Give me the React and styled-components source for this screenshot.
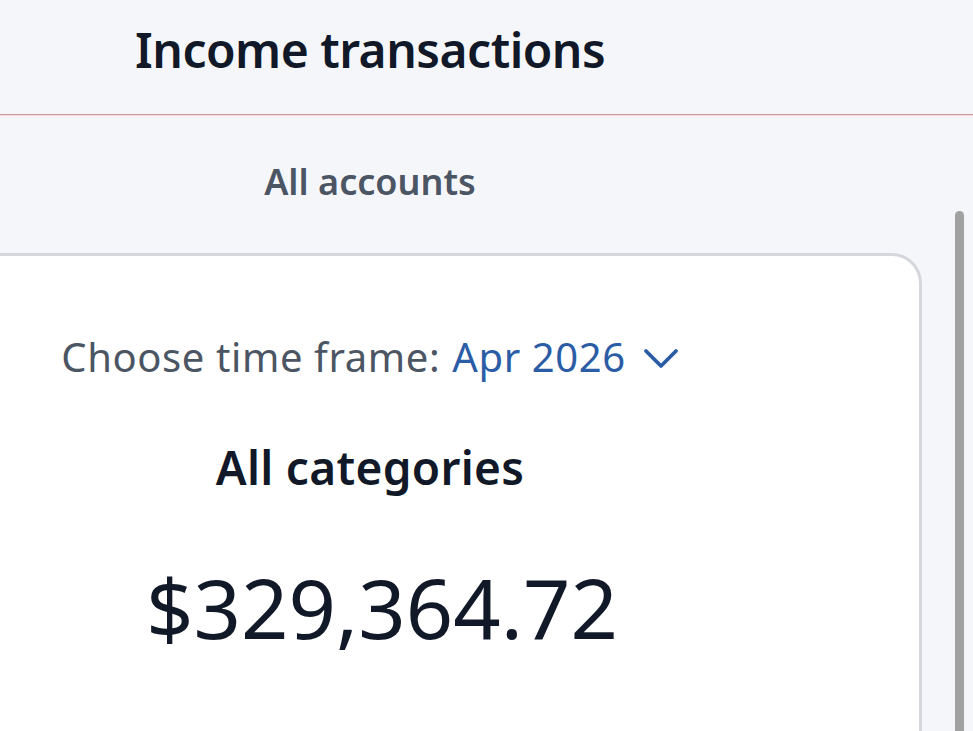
import React from "react";
import styled, { createGlobalStyle } from "styled-components";

const Global = createGlobalStyle`
  html, body { margin: 0; padding: 0; }
  body {
    background: #f5f6fa;
    font-family: "Noto Sans", "Open Sans", sans-serif;
    -webkit-font-smoothing: antialiased;
  }
`;

const Page = styled.div`
  width: 973px;
  height: 731px;
  display: flex;
  flex-direction: column;
  overflow: hidden;
  background: #f5f6fa;
`;

const Header = styled.header`
  height: 115px;
  box-sizing: border-box;
  padding: 17px 0 0 135px;
  border-bottom: 1px solid #cf959b;
  box-shadow: 0 1px 1px rgba(236, 170, 178, 0.35);
`;

const Title = styled.h1`
  margin: 0;
  font-size: 48px;
  line-height: 1.362;
  font-weight: 600;
  letter-spacing: -0.5px;
  color: #111827;
`;

const Body = styled.div`
  flex: 1;
  display: grid;
  grid-template-columns: 922px 51px;
  min-height: 0;
`;

const Main = styled.main`
  margin-left: -182px;
  display: flex;
  flex-direction: column;
  align-items: stretch;
  min-width: 0;
`;

const AccountLabel = styled.div`
  padding-top: 42px;
  height: 138px;
  box-sizing: border-box;
  text-align: center;
  font-size: 36px;
  line-height: 1.362;
  font-weight: 600;
  color: #4b5563;
`;

const Card = styled.section`
  flex: 1;
  background: #ffffff;
  border: 3px solid #d5d7dc;
  border-bottom: none;
  border-radius: 30px 30px 0 0;
  display: flex;
  flex-direction: column;
  align-items: center;
  padding-top: 74px;
`;

const TimeFrame = styled.div`
  display: flex;
  align-items: center;
  font-size: 40px;
  line-height: 1.362;
  letter-spacing: 0.6px;
  color: #4b5563;
`;

const TimeButton = styled.button`
  display: flex;
  align-items: center;
  gap: 17px;
  margin-left: 12px;
  padding: 0;
  border: none;
  background: none;
  font: inherit;
  letter-spacing: inherit;
  color: #2b5ca6;
  cursor: pointer;
`;

const Chevron = styled.svg`
  width: 36px;
  height: 22px;
  margin-top: 4px;
`;

const CategoryTitle = styled.h2`
  margin: 52px 0 0;
  font-size: 46px;
  line-height: 1.362;
  font-weight: 600;
  letter-spacing: 0.3px;
  color: #111827;
`;

const Amount = styled.div`
  margin-top: 51px;
  padding-left: 24px;
  font-size: 83px;
  line-height: 1.362;
  font-weight: 400;
  color: #111827;
`;

const Rail = styled.div`
  display: flex;
  padding: 96px 0 0 33px;
`;

const Thumb = styled.div`
  width: 9px;
  background: #a1a1a1;
  border-radius: 5px 5px 0 0;
`;

export default function App() {
  return (
    <>
      <Global />
      <Page>
        <Header>
          <Title>Income transactions</Title>
        </Header>
        <Body>
          <Main>
            <AccountLabel>All accounts</AccountLabel>
            <Card>
              <TimeFrame>
                Choose time frame:
                <TimeButton>
                  Apr 2026
                  <Chevron viewBox="0 0 36 22" fill="none">
                    <polyline
                      points="3,3 18,18 33,3"
                      stroke="#2b5ca6"
                      strokeWidth="3.8"
                      strokeLinecap="round"
                      strokeLinejoin="round"
                    />
                  </Chevron>
                </TimeButton>
              </TimeFrame>
              <CategoryTitle>All categories</CategoryTitle>
              <Amount>$329,364.72</Amount>
            </Card>
          </Main>
          <Rail>
            <Thumb />
          </Rail>
        </Body>
      </Page>
    </>
  );
}
